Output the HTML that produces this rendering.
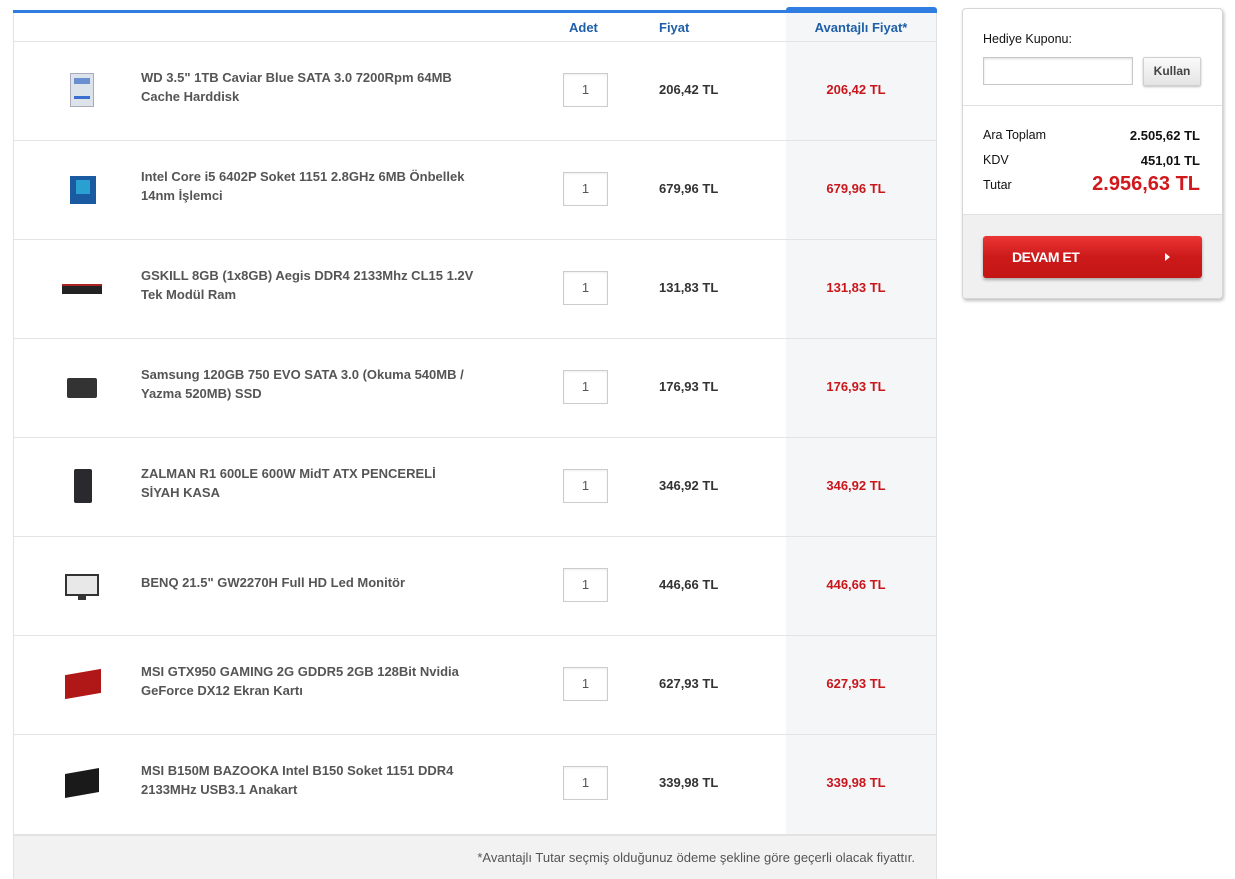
<!DOCTYPE html>
<html><head><meta charset="utf-8"><style>
*{margin:0;padding:0;box-sizing:border-box}
body{width:1235px;height:879px;background:#fff;font-family:"Liberation Sans",Arial,sans-serif;position:relative;overflow:hidden}
.a{position:absolute}
.tbl{left:13px;top:10px;width:924px;height:869px;border-left:1px solid #e2e2e2;border-right:1px solid #e2e2e2}
.blue{left:13px;top:10px;width:773px;height:3px;background:#2f7de1}
.blue2{left:786px;top:7px;width:151px;height:6px;background:#2f7de1;border-radius:3px 3px 0 0}
.avcol{left:786px;top:13px;width:150px;height:821px;background:#f5f6f8}
.h{top:20px;font-size:13px;font-weight:bold;color:#1f5fa8}
.line{left:14px;width:922px;height:1px;background:#e4e4e4}
.name{left:141px;width:336px;font-size:13px;font-weight:bold;color:#555;line-height:19px}
.qty{left:563px;width:45px;height:34px;border:1px solid #ccc;font-size:13px;color:#555;text-align:center;line-height:32px;box-shadow:inset 0 1px 2px #eee}
.pr{left:659px;font-size:13px;font-weight:bold;color:#333}
.ap{left:786px;width:140px;text-align:center;font-size:13px;font-weight:bold;color:#c8161b}
.foot{left:14px;top:834px;width:922px;height:45px;background:#f2f2f2;border-top:2px solid #e2e2e2}
.side{left:962px;top:8px;width:261px;height:291px;border:1px solid #d6d6d6;border-radius:4px;box-shadow:1px 2px 3px rgba(0,0,0,.25);background:#fff;overflow:hidden}
.lbl{font-size:12.5px;color:#111}
.val{font-size:13px;font-weight:bold;color:#111;text-align:right}
</style></head><body>
<div class="a tbl"></div>
<div class="a avcol"></div>
<div class="a blue"></div>
<div class="a blue2"></div>
<div class="a h" style="left:569px">Adet</div>
<div class="a h" style="left:659px">Fiyat</div>
<div class="a h" style="left:786px;width:150px;text-align:center;font-weight:bold">Avantajlı Fiyat*</div>
<div class="a line" style="top:41px"></div>

<div class="a line" style="top:140px"></div>
<div class="a line" style="top:239px"></div>
<div class="a line" style="top:338px"></div>
<div class="a line" style="top:437px"></div>
<div class="a line" style="top:536px"></div>
<div class="a line" style="top:635px"></div>
<div class="a line" style="top:734px"></div>

<div class="a" style="left:70px;top:73px;width:24px;height:34px;background:#dde3ea;border:1px solid #aab"><div style="margin:4px 3px;height:6px;background:#6a8fd0"></div><div style="margin:12px 3px 0;height:3px;background:#3a6fd0"></div></div>
<div class="a" style="left:70px;top:176px;width:26px;height:28px;background:#1a5aa0"><div style="margin:4px 6px;height:14px;background:#2aa0d0"></div></div>
<div class="a" style="left:62px;top:284px;width:40px;height:10px;background:#222;border-top:2px solid #a22"></div>
<div class="a" style="left:67px;top:378px;width:30px;height:20px;background:#333;border-radius:2px"></div>
<div class="a" style="left:74px;top:469px;width:18px;height:34px;background:#2a2a2e;border-radius:2px"></div>
<div class="a" style="left:65px;top:574px;width:34px;height:22px;background:#e8e8e8;border:2px solid #333"></div>
<div class="a" style="left:78px;top:596px;width:8px;height:4px;background:#333"></div>
<div class="a" style="left:65px;top:672px;width:36px;height:24px;background:#b01818;transform:skewY(-10deg)"></div>
<div class="a" style="left:65px;top:771px;width:34px;height:24px;background:#1a1a1a;transform:skewY(-10deg)"></div>

<div class="a name" style="top:68px">WD 3.5" 1TB Caviar Blue SATA 3.0 7200Rpm 64MB Cache Harddisk</div>
<div class="a name" style="top:167px">Intel Core i5 6402P Soket 1151 2.8GHz 6MB Önbellek 14nm İşlemci</div>
<div class="a name" style="top:266px">GSKILL 8GB (1x8GB) Aegis DDR4 2133Mhz CL15 1.2V Tek Modül Ram</div>
<div class="a name" style="top:365px">Samsung 120GB 750 EVO SATA 3.0 (Okuma 540MB / Yazma 520MB) SSD</div>
<div class="a name" style="top:464px">ZALMAN R1 600LE 600W MidT ATX PENCERELİ<br>SİYAH KASA</div>
<div class="a name" style="top:573px">BENQ 21.5" GW2270H Full HD Led Monitör</div>
<div class="a name" style="top:662px">MSI GTX950 GAMING 2G GDDR5 2GB 128Bit Nvidia GeForce DX12 Ekran Kartı</div>
<div class="a name" style="top:761px">MSI B150M BAZOOKA Intel B150 Soket 1151 DDR4 2133MHz USB3.1 Anakart</div>

<div class="a qty" style="top:73px">1</div>
<div class="a qty" style="top:172px">1</div>
<div class="a qty" style="top:271px">1</div>
<div class="a qty" style="top:370px">1</div>
<div class="a qty" style="top:469px">1</div>
<div class="a qty" style="top:568px">1</div>
<div class="a qty" style="top:667px">1</div>
<div class="a qty" style="top:766px">1</div>

<div class="a pr" style="top:82px">206,42 TL</div><div class="a ap" style="top:82px">206,42 TL</div>
<div class="a pr" style="top:181px">679,96 TL</div><div class="a ap" style="top:181px">679,96 TL</div>
<div class="a pr" style="top:280px">131,83 TL</div><div class="a ap" style="top:280px">131,83 TL</div>
<div class="a pr" style="top:379px">176,93 TL</div><div class="a ap" style="top:379px">176,93 TL</div>
<div class="a pr" style="top:478px">346,92 TL</div><div class="a ap" style="top:478px">346,92 TL</div>
<div class="a pr" style="top:577px">446,66 TL</div><div class="a ap" style="top:577px">446,66 TL</div>
<div class="a pr" style="top:676px">627,93 TL</div><div class="a ap" style="top:676px">627,93 TL</div>
<div class="a pr" style="top:775px">339,98 TL</div><div class="a ap" style="top:775px">339,98 TL</div>

<div class="a foot"></div>
<div class="a" style="left:14px;top:850px;width:901px;text-align:right;font-size:13px;color:#555">*Avantajlı Tutar seçmiş olduğunuz ödeme şekline göre geçerli olacak fiyattır.</div>

<div class="a side">
 <div class="a lbl" style="left:20px;top:23px">Hediye Kuponu:</div>
 <div class="a" style="left:20px;top:48px;width:150px;height:28px;border:1px solid #c8c8c8;box-shadow:inset 0 1px 2px #ddd"></div>
 <div class="a" style="left:180px;top:48px;width:58px;height:29px;border:1px solid #d0d0d0;border-radius:2px;background:linear-gradient(#fafafa,#e4e4e4);box-shadow:0 1px 2px rgba(0,0,0,.25);font-size:12px;font-weight:bold;color:#444;text-align:center;line-height:27px">Kullan</div>
 <div class="a" style="left:0;top:96px;width:261px;height:1px;background:#e0e0e0"></div>
 <div class="a lbl" style="left:20px;top:119px">Ara Toplam</div>
 <div class="a val" style="right:22px;top:119px">2.505,62 TL</div>
 <div class="a lbl" style="left:20px;top:144px">KDV</div>
 <div class="a val" style="right:22px;top:144px">451,01 TL</div>
 <div class="a lbl" style="left:20px;top:169px">Tutar</div>
 <div class="a" style="right:22px;top:164px;font-size:20px;font-weight:bold;color:#d0181d">2.956,63 TL</div>
 <div class="a" style="left:0;top:205px;width:261px;height:90px;background:#f0f0f0;border-top:1px solid #e0e0e0"></div>
 <div class="a" style="left:20px;top:227px;width:219px;height:42px;border-radius:3px;background:linear-gradient(#ec3535,#cc1a1a 50%,#c41515);box-shadow:0 2px 3px rgba(0,0,0,.3)">
  <div class="a" style="left:29px;top:13px;font-size:14px;font-weight:bold;color:#fff;letter-spacing:-0.5px">DEVAM ET</div>
  <div class="a" style="left:182px;top:17px;width:0;height:0;border-left:5px solid #fff;border-top:4px solid transparent;border-bottom:4px solid transparent"></div>
 </div>
</div>
</body></html>
